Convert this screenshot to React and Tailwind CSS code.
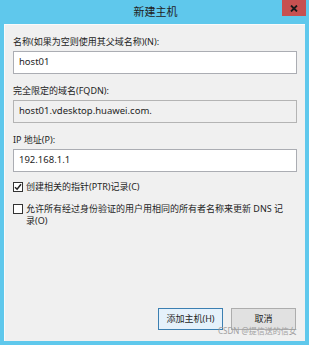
const font = { fontFamily: '"Noto Sans", "Noto Sans CJK SC", sans-serif' };

function Field({ label, value, disabled }) {
  return (
    <div className="flex flex-col">
      <div className="h-[12px] leading-[12px] mb-[3px] whitespace-nowrap">{label}</div>
      <div
        className={`h-[23px] border px-[5px] flex items-center text-[9.5px] ${
          disabled ? "bg-[#f0f0f0] border-[#b4b4b4]" : "bg-white border-[#abadb3]"
        }`}
      >
        {value}
      </div>
    </div>
  );
}

export default function App() {
  return (
    <div className="w-[309px] h-[345px] bg-[#5fc8ec] flex flex-col text-[9px] text-[#1e1e1e] relative" style={font}>
      <div className="h-[24px] flex items-center relative">
        <div className="flex-1 text-center text-[11px] text-[#222] leading-[24px] pl-[2px]">新建主机</div>
        <div className="absolute right-[3px] top-0 w-[24px] h-[16px] bg-[#c75050] flex items-center justify-center">
          <svg width="8" height="7" viewBox="0 0 8 7">
            <path d="M1 0.5 L7 6.5 M7 0.5 L1 6.5" stroke="#1a1a1a" strokeWidth="1.8" />
          </svg>
        </div>
      </div>
      <div className="ml-[4px] mr-[4px] mb-[4px] flex-1 bg-[#f0f0f0] border-l border-t border-[#fafafa] px-[8px] pt-[11px] flex flex-col">
        <div className="flex flex-col gap-[11px]">
          <Field label="名称(如果为空则使用其父域名称)(N):" value="host01" />
          <Field label="完全限定的域名(FQDN):" value="host01.vdesktop.huawei.com." disabled />
          <Field label="IP 地址(P):" value="192.168.1.1" />
        </div>
        <label className="flex items-center gap-[3px] mt-[9px] h-[12px]">
          <span className="w-[10px] h-[10px] border border-[#333] bg-white flex items-center justify-center shrink-0">
            <svg width="8" height="8" viewBox="0 0 8 8">
              <path d="M1 4.2 L3.1 6.2 L7 1.2" fill="none" stroke="#222" strokeWidth="1.5" />
            </svg>
          </span>
          <span className="leading-[12px] whitespace-nowrap">创建相关的指针(PTR)记录(C)</span>
        </label>
        <label className="flex items-start gap-[3px] mt-[10px]">
          <span className="w-[10px] h-[10px] mt-[1px] border border-[#333] bg-white shrink-0" />
          <span className="leading-[12px] flex flex-col">
            <span className="whitespace-nowrap">允许所有经过身份验证的用户用相同的所有者名称来更新 DNS 记</span>
            <span>录(O)</span>
          </span>
        </label>
        <div className="flex-1" />
        <div className="flex justify-end gap-[8px] mb-[11px] mr-[1px]">
          <button className="w-[65px] h-[22px] border border-[#3c7fb1] bg-[#e5f1fb] text-[9px] leading-[20px]">添加主机(H)</button>
          <button className="w-[65px] h-[22px] border border-[#adadad] bg-[#e1e1e1] text-[9px] leading-[20px]">取消</button>
        </div>
      </div>
      <div className="absolute left-[218px] top-[326px] text-[8px] leading-[10px] text-[#a0a0a0] whitespace-nowrap">CSDN @提信送的信女</div>
    </div>
  );
}
